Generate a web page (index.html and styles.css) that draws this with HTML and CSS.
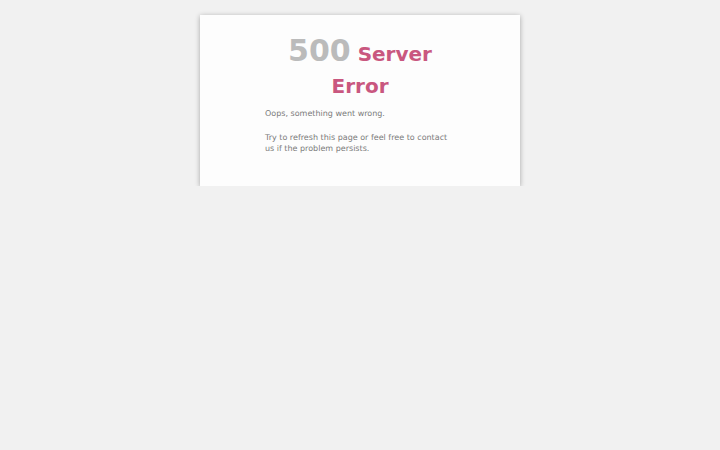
FILE: index.html
```html
<!DOCTYPE html>
<html>
<head>
<meta charset="utf-8">
<link rel="stylesheet" href="styles.css">
</head>
<body>
<div class="card">
  <h1 class="title"><span class="code">500</span> <span class="word">Server</span> <span class="word">Error</span></h1>
  <p class="msg">Oops, something went wrong.</p>
  <p class="msg">Try to refresh this page or feel free to contact us if the problem persists.</p>
</div>
</body>
</html>
```
FILE: styles.css
```css
html, body {
  margin: 0;
  padding: 0;
  background: #f1f1f1;
  font-family: "DejaVu Sans", sans-serif;
}
.card {
  width: 320px;
  height: 171px;
  box-sizing: border-box;
  margin: 15px auto 0;
  padding: 21px 65px 0;
  background: #fdfdfd;
  box-shadow: 0 1px 5px rgba(0, 0, 0, 0.32);
}
.title {
  margin: 0 0 6px;
  text-align: center;
  font-size: 20px;
  line-height: 32px;
  font-weight: bold;
  color: #c9577f;
}
.code {
  display: inline-block;
  font-size: 30px;
  line-height: 30px;
  color: #bbbbbb;
}
.msg {
  margin: 0 0 13px;
  font-size: 8px;
  line-height: 11px;
  color: #7a7a7a;
  text-rendering: geometricPrecision;
}
```
